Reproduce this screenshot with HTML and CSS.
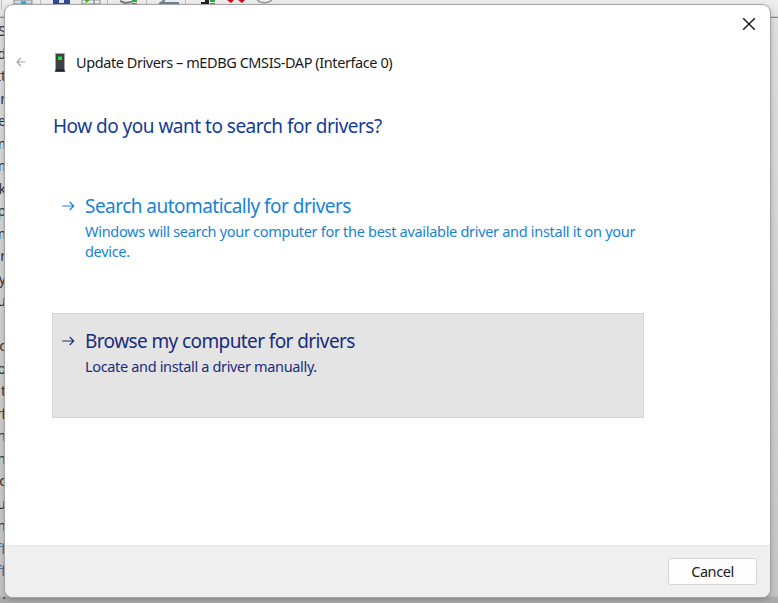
FILE: index.html
```html
<!DOCTYPE html>
<html lang="en">
<head>
<meta charset="utf-8">
<title>Update Drivers</title>
<link rel="stylesheet" href="styles.css">
</head>
<body>
<div class="desktop">
  <svg class="toolbar" width="778" height="18" viewBox="0 0 778 18">
    <path d="M1.500 0v9M40.500 0v5M107.500 0v5M146.500 0v5M185.500 0v5" stroke="#bbb"/>
    <path d="M14 0h18v4H14z" fill="#d3dbe2" stroke="#8a8f94"/><path d="M21 1h5v3h-5z" fill="#18b8ee"/>
    <path d="M53 0h17v5H53z" fill="#304a99"/><path d="M59 0h5v3h-5z" fill="#e1e6f2"/>
    <path d="M82 0h18v4H82z" fill="#eee" stroke="#8995a0"/><path d="M85 0l5 0-4 3z" fill="#4caf24"/><path d="M94 0v4" stroke="#66788c"/>
    <path d="M120 1l5 2 7-1" fill="none" stroke="#777" stroke-width="2"/><path d="M132 1h5M132 4h5" stroke="#31a54a" stroke-width="2"/>
    <path d="M159 4l6-4M161 3h18" fill="none" stroke="#718395" stroke-width="2"/>
    <path d="M201 4v-2h4v-2h4v4z" fill="#222"/><path d="M210 1h5M210 4h5" stroke="#31a54a" stroke-width="2"/>
    <path d="M227 0h7l-3 3zM238 0h7l-3 3z" fill="#d00b20"/>
    <path d="M256 -2a9 7 0 0 0 17 0" fill="#eee" stroke="#999" stroke-width="1.500"/>
    <path d="M0 17.500h778" stroke="#888" stroke-width="1.500"/>
  </svg>
  <div class="lines">
    <span>-S</span><span>d</span><span>tt</span><span>or</span><span>ue</span><span>m</span><span>m</span><span>sk</span><span>sp</span><span>m</span><span>r</span><span>y</span><span>u</span><span></span><span>c</span><span>o</span><span>t</span><span>rf</span><span>n</span><span>n</span><span>oc</span><span>cu</span><span>n</span><span class="link">ff</span><span class="link">ff</span><span>.</span>
  </div>
  <main class="dialog">
    <button class="close" aria-label="Close"><svg width="14" height="14" viewBox="0 0 14 14"><path d="M1.200 1.200l11.600 11.600M12.800 1.200L1.200 12.800" stroke="#111" stroke-width="1.350"/></svg></button>
    <header class="title">
      <svg class="back" width="10" height="10" viewBox="0 0 10 10"><path d="M9.500 5H1M4.800 1L.9 5l3.900 4" fill="none" stroke="#a3a3a3" stroke-width="1.100"/></svg>
      <svg class="device" width="12" height="20" viewBox="0 0 12 20"><path d="M1.500.5h9v16h-9z" fill="#3d4144" stroke="#a2a7aa"/><path d="M2 16h8l1 2H1z" fill="#24282a"/><path d="M1 18.500h10" stroke="#444"/><path d="M4 3.500h4v3.500h-4z" fill="#17e82b"/></svg>
      <span class="caption">Update Drivers – mEDBG CMSIS-DAP (Interface 0)</span>
    </header>
    <h1>How do you want to search for drivers?</h1>
    <section class="choice auto">
      <svg class="arrow" width="13" height="10" viewBox="0 0 13 10"><path d="M.3 5h11.400M7.700 1l4 4-4 4" fill="none" stroke="currentColor" stroke-width="1.150"/></svg>
      <div class="copy"><h2>Search automatically for drivers</h2><p>Windows will search your computer for the best available driver and install it on your<br>device.</p></div>
    </section>
    <section class="choice browse">
      <svg class="arrow" width="13" height="10" viewBox="0 0 13 10"><path d="M.3 5h11.400M7.700 1l4 4-4 4" fill="none" stroke="currentColor" stroke-width="1.150"/></svg>
      <div class="copy"><h2>Browse my computer for drivers</h2><p>Locate and install a driver manually.</p></div>
    </section>
    <footer><button class="cancel">Cancel</button></footer>
  </main>
</div>
</body>
</html>
```
FILE: styles.css
```css
* { box-sizing: border-box; }
body { margin: 0; font-family: "Noto Sans", "Open Sans", sans-serif; overflow: hidden; }
h1, h2, p { margin: 0; font-weight: 400; white-space: nowrap; }
button { font: inherit; padding: 0; }
svg { flex: none; display: block; }
.desktop { position: relative; width: 778px; height: 603px; overflow: hidden; background: linear-gradient(#eee 0, #ddd 25px, #cdcdcd 400px, #c5c5c5 595px, #aaa 598px); }
.toolbar { height: 18px; }
.lines { width: 6px; padding-top: 2px; color: #303038; font-size: 14px; }
.lines span { display: flex; justify-content: flex-end; height: 22.5px; line-height: 22.5px; white-space: nowrap; }
.lines .link { color: #306b9d; }
.dialog { position: absolute; left: 5px; top: 5px; width: 765px; height: 592px; background: #fff; border-radius: 8px; overflow: hidden; display: flex; flex-direction: column; box-shadow: 0 0 0 1px #a4a4a4, 0 2px 6px #0004; }
.close { width: 14px; height: 14px; border: 0; background: none; align-self: flex-end; margin: 12px 14px 0 0; }
.title { display: flex; align-items: center; height: 24px; margin-top: 20px; padding-left: 11px; }
.back { margin-bottom: 3px; }
.device { margin-left: 28px; }
.caption { margin: 0 0 2px 10px; font-size: 14.5px; letter-spacing: -.42px; color: #191919; white-space: nowrap; line-height: 24px; }
h1 { margin: 36px 0 0 48px; height: 30px; line-height: 30px; font-size: 19px; letter-spacing: -.51px; color: #123c9b; }
.choice { display: flex; width: 592px; height: 105px; margin-left: 47px; border: 1px solid transparent; padding: 12px 0 0 9px; }
.auto { margin-top: 37px; color: #1782d8; }
.browse { margin-top: 30px; background: #e4e4e4; border-color: #d5d5d5; color: #182d7d; }
.arrow { margin-top: 10px; }
.copy { margin-left: 10px; }
h2 { height: 30px; line-height: 30px; font-size: 19px; letter-spacing: -.53px; }
.browse h2 { letter-spacing: -.6px; }
p { font-size: 14.5px; line-height: 20px; letter-spacing: -.3px; }
.browse p { letter-spacing: -.34px; }
footer { height: 52px; margin-top: auto; background: #efefef; border-top: 1px solid #e7e7e7; display: flex; justify-content: flex-end; padding: 12px 13px 0 0; }
.cancel { width: 89px; height: 27px; background: #fdfdfd; border: 1px solid #d6d6d6; border-radius: 3px; font-size: 14.5px; color: #191919; letter-spacing: -.4px; line-height: 20px; padding-bottom: 2px; }
```
